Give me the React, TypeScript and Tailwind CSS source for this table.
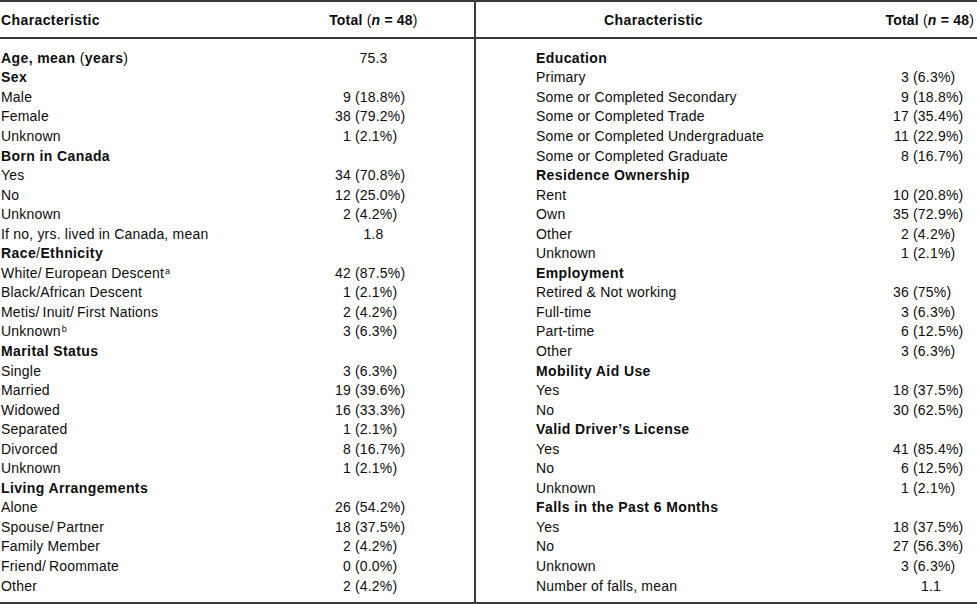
import React from 'react';

type Row =
  | { kind: 'head'; label: React.ReactNode; mean?: string }
  | { kind: 'item'; label: React.ReactNode; n: string; pct: string }
  | { kind: 'mean'; label: React.ReactNode; value: string };

const sup = (s: string) => (
  <span className="relative -top-[4px] text-[9px] leading-none pl-[1px]">{s}</span>
);

const left: Row[] = [
  {
    kind: 'head',
    label: (
      <>
        Age, mean <span className="font-normal">(</span>years<span className="font-normal">)</span>
      </>
    ),
    mean: '75.3',
  },
  { kind: 'head', label: 'Sex' },
  { kind: 'item', label: 'Male', n: '9', pct: '(18.8%)' },
  { kind: 'item', label: 'Female', n: '38', pct: '(79.2%)' },
  { kind: 'item', label: 'Unknown', n: '1', pct: '(2.1%)' },
  { kind: 'head', label: 'Born in Canada' },
  { kind: 'item', label: 'Yes', n: '34', pct: '(70.8%)' },
  { kind: 'item', label: 'No', n: '12', pct: '(25.0%)' },
  { kind: 'item', label: 'Unknown', n: '2', pct: '(4.2%)' },
  { kind: 'mean', label: 'If no, yrs. lived in Canada, mean', value: '1.8' },
  {
    kind: 'head',
    label: (
      <>
        Race<span className="font-normal">/</span>Ethnicity
      </>
    ),
  },
  { kind: 'item', label: <>White/&thinsp;European Descent{sup('a')}</>, n: '42', pct: '(87.5%)' },
  { kind: 'item', label: 'Black/African Descent', n: '1', pct: '(2.1%)' },
  { kind: 'item', label: <>Metis/&thinsp;Inuit/&thinsp;First Nations</>, n: '2', pct: '(4.2%)' },
  { kind: 'item', label: <>Unknown{sup('b')}</>, n: '3', pct: '(6.3%)' },
  { kind: 'head', label: 'Marital Status' },
  { kind: 'item', label: 'Single', n: '3', pct: '(6.3%)' },
  { kind: 'item', label: 'Married', n: '19', pct: '(39.6%)' },
  { kind: 'item', label: 'Widowed', n: '16', pct: '(33.3%)' },
  { kind: 'item', label: 'Separated', n: '1', pct: '(2.1%)' },
  { kind: 'item', label: 'Divorced', n: '8', pct: '(16.7%)' },
  { kind: 'item', label: 'Unknown', n: '1', pct: '(2.1%)' },
  { kind: 'head', label: 'Living Arrangements' },
  { kind: 'item', label: 'Alone', n: '26', pct: '(54.2%)' },
  { kind: 'item', label: <>Spouse/&thinsp;Partner</>, n: '18', pct: '(37.5%)' },
  { kind: 'item', label: 'Family Member', n: '2', pct: '(4.2%)' },
  { kind: 'item', label: <>Friend/&thinsp;Roommate</>, n: '0', pct: '(0.0%)' },
  { kind: 'item', label: 'Other', n: '2', pct: '(4.2%)' },
];

const right: Row[] = [
  { kind: 'head', label: 'Education' },
  { kind: 'item', label: 'Primary', n: '3', pct: '(6.3%)' },
  { kind: 'item', label: 'Some or Completed Secondary', n: '9', pct: '(18.8%)' },
  { kind: 'item', label: 'Some or Completed Trade', n: '17', pct: '(35.4%)' },
  { kind: 'item', label: 'Some or Completed Undergraduate', n: '11', pct: '(22.9%)' },
  { kind: 'item', label: 'Some or Completed Graduate', n: '8', pct: '(16.7%)' },
  { kind: 'head', label: 'Residence Ownership' },
  { kind: 'item', label: 'Rent', n: '10', pct: '(20.8%)' },
  { kind: 'item', label: 'Own', n: '35', pct: '(72.9%)' },
  { kind: 'item', label: 'Other', n: '2', pct: '(4.2%)' },
  { kind: 'item', label: 'Unknown', n: '1', pct: '(2.1%)' },
  { kind: 'head', label: 'Employment' },
  { kind: 'item', label: 'Retired & Not working', n: '36', pct: '(75%)' },
  { kind: 'item', label: 'Full-time', n: '3', pct: '(6.3%)' },
  { kind: 'item', label: 'Part-time', n: '6', pct: '(12.5%)' },
  { kind: 'item', label: 'Other', n: '3', pct: '(6.3%)' },
  { kind: 'head', label: 'Mobility Aid Use' },
  { kind: 'item', label: 'Yes', n: '18', pct: '(37.5%)' },
  { kind: 'item', label: 'No', n: '30', pct: '(62.5%)' },
  { kind: 'head', label: 'Valid Driver’s License' },
  { kind: 'item', label: 'Yes', n: '41', pct: '(85.4%)' },
  { kind: 'item', label: 'No', n: '6', pct: '(12.5%)' },
  { kind: 'item', label: 'Unknown', n: '1', pct: '(2.1%)' },
  { kind: 'head', label: 'Falls in the Past 6 Months' },
  { kind: 'item', label: 'Yes', n: '18', pct: '(37.5%)' },
  { kind: 'item', label: 'No', n: '27', pct: '(56.3%)' },
  { kind: 'item', label: 'Unknown', n: '3', pct: '(6.3%)' },
  { kind: 'mean', label: 'Number of falls, mean', value: '1.1' },
];

function TotalHeader() {
  return (
    <span className="font-bold tracking-[0.2px] whitespace-nowrap">
      Total <span className="font-normal">(</span>
      <i>n</i> = 48<span className="font-normal">)</span>
    </span>
  );
}

function Half({
  rows,
  labelCls,
  headLabelCls,
  headValueCls,
  valueCls,
  numWrap,
  numCls,
  centerCls,
}: {
  rows: Row[];
  labelCls: string;
  headLabelCls: string;
  headValueCls: string;
  valueCls: string;
  numWrap: string;
  numCls: string;
  centerCls: string;
}) {
  return (
    <div className="flex flex-col">
      {/* Header */}
      <div className="flex h-[37px] items-center border-b-2 border-[#3a3a3a]">
        <div className={headLabelCls + ' font-bold tracking-[0.4px]'}>Characteristic</div>
        <div className={valueCls}>
          <div className={headValueCls}>
            <TotalHeader />
          </div>
        </div>
      </div>

      {/* Body */}
      <div className="flex flex-col pt-[9px] pb-[7px]">
        {rows.map((r, i) => (
          <div key={i} className="flex h-[19.56px] items-center">
            <div
              className={
                labelCls + (r.kind === 'head' ? ' font-bold tracking-[0.4px]' : ' tracking-[0.2px]')
              }
            >
              {r.label}
            </div>
            <div className={valueCls + ' tracking-[0.2px]'}>
              {r.kind === 'item' && (
                <div className={'flex ' + numWrap}>
                  <span className={numCls + ' text-right'}>{r.n}</span>
                  <span className="pl-[4px]">{r.pct}</span>
                </div>
              )}
              {r.kind === 'mean' && <div className={centerCls}>{r.value}</div>}
              {r.kind === 'head' && r.mean && <div className={centerCls}>{r.mean}</div>}
            </div>
          </div>
        ))}
      </div>
    </div>
  );
}

export default function App() {
  return (
    <div
      className="w-[977px] h-[604px] bg-white text-[#0d0d0d] text-[14px] leading-none overflow-hidden"
      style={{ fontFamily: '"Liberation Sans", sans-serif' }}
    >
      <div className="flex border-t-2 border-b-2 border-[#3a3a3a] h-[604px]">
        <div className="w-[476px] shrink-0 border-r-2 border-[#3a3a3a]">
          <Half
            rows={left}
            headLabelCls="w-[270px] pl-[1px]"
            headValueCls="text-center pl-[4px]"
            labelCls="w-[270px] pl-[1px] whitespace-nowrap"
            valueCls="w-[206px]"
            numWrap="pl-[52px]"
            numCls="w-[30px]"
            centerCls="text-center pl-[4px]"
          />
        </div>
        <div className="flex-1">
          <Half
            rows={right}
            headLabelCls="w-[391px] pl-[128px]"
            headValueCls="text-right pr-[1px]"
            labelCls="w-[391px] pl-[60px] whitespace-nowrap"
            valueCls="w-[108px]"
            numWrap="pl-[12px]"
            numCls="w-[30px]"
            centerCls="text-center pl-[20px]"
          />
        </div>
      </div>
    </div>
  );
}
